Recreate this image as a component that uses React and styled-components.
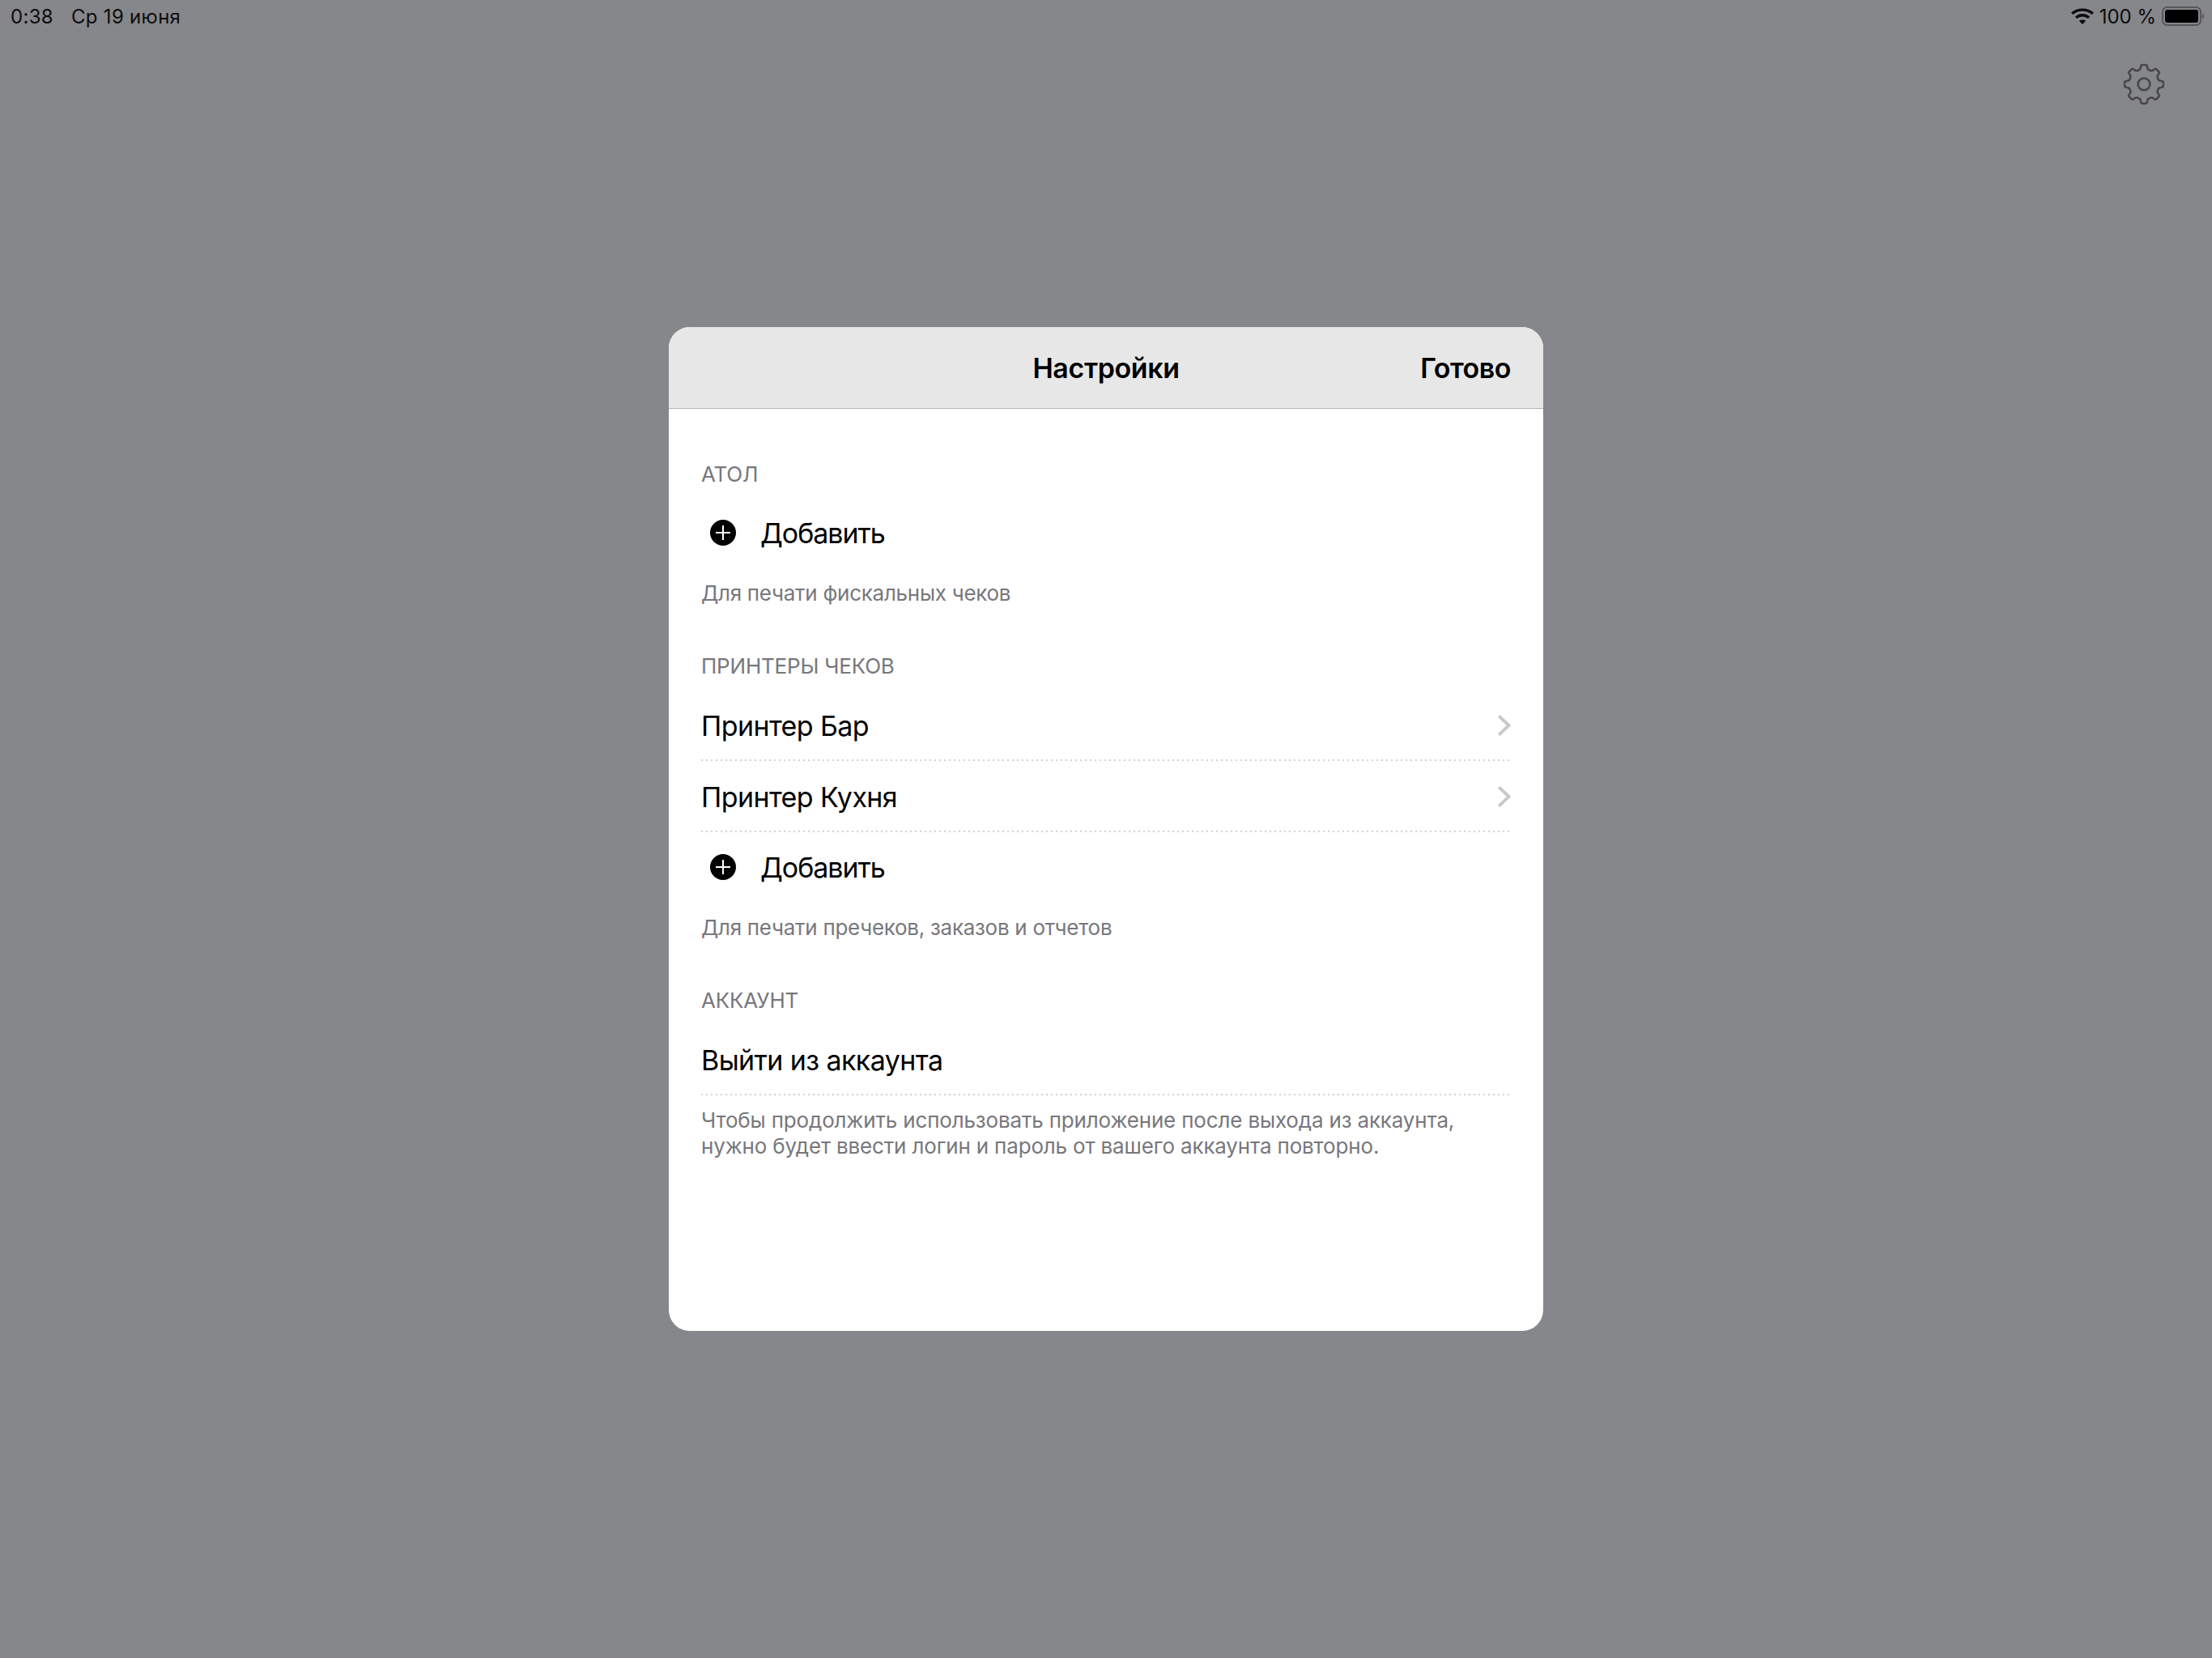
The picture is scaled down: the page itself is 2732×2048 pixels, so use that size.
import React from "react";
import styled, { createGlobalStyle } from "styled-components";

const Global = createGlobalStyle`
  html, body { margin: 0; padding: 0; }
  body { background: #86878b; }
  * { box-sizing: border-box; }
`;

const FONT = `Inter, "Noto Sans", "Liberation Sans", sans-serif`;

const Page = styled.div`
  width: 2732px;
  height: 2048px;
  background: #86878b;
  font-family: ${FONT};
  display: flex;
  flex-direction: column;
  overflow: hidden;
`;
const StatusBar = styled.div`
  height: 40px;
  display: flex;
  align-items: center;
  justify-content: space-between;
  padding: 0 10px 0 13px;
  font-size: 24px;
  color: #0c0c0d;
`;
const StatusGroup = styled.div`
  display: flex;
  align-items: center;
  gap: ${p => p.$gap}px;
  letter-spacing: ${p => p.$ls ?? 0}px;
`;
const ToolBar = styled.div`
  height: 88px;
  display: flex;
  justify-content: flex-end;
  align-items: flex-start;
  padding: 38px 58px 0 0;
`;
const ModalRow = styled.div`
  display: flex;
  justify-content: center;
  padding-top: 276px;
`;
const Modal = styled.div`
  width: 1080px;
  height: 1240px;
  background: #fff;
  border-radius: 26px;
  overflow: hidden;
  display: flex;
  flex-direction: column;
`;
const Header = styled.div`
  height: 101px;
  background: #e7e7e7;
  border-bottom: 1px solid #b2b2b3;
  display: grid;
  grid-template-columns: 1fr auto 1fr;
  align-items: center;
  padding: 0 40px;
`;
const Title = styled.div`
  grid-column: 2;
  font-size: 34px;
  font-weight: 600;
  letter-spacing: -0.4px;
  color: #000;
`;
const Done = styled.div`
  grid-column: 3;
  justify-self: end;
  font-size: 34px;
  font-weight: 600;
  letter-spacing: -0.5px;
  color: #000;
`;
const Body = styled.div`
  padding: 63px 40px 0;
`;
const Section = styled.section`
  margin-bottom: 56px;
`;
const Label = styled.div`
  height: 36px;
  line-height: 36px;
  font-size: 26px;
  letter-spacing: -0.2px;
  color: #77777c;
  margin-bottom: 11px;
`;
const Row = styled.div`
  height: 88px;
  display: flex;
  align-items: center;
  justify-content: space-between;
  font-size: 34px;
  letter-spacing: -0.6px;
  color: #000;
  background-image: ${p => p.$sep ? "linear-gradient(to right, #d2d2d4 2px, transparent 2px)" : "none"};
  background-size: 6px 2px;
  background-position: left bottom;
  background-repeat: repeat-x;
`;
const AddLabel = styled.div`
  display: flex;
  align-items: center;
  gap: 30px;
  padding: 0 0 2px 11px;
  letter-spacing: -1.05px;
`;
const Note = styled.div`
  font-size: 26px;
  line-height: 32px;
  letter-spacing: ${p => p.$ls ?? -0.28}px;
  color: #77777c;
  margin-top: ${p => p.$mt ?? 14}px;
`;

const gearPath = (() => {
  const cx = 26, cy = 26, n = 8, R = 23.8, r = 19;
  const pts = [];
  for (let i = 0; i < n; i++) {
    const a = (i / n) * Math.PI * 2 - Math.PI / 2;
    const s = Math.PI / n;
    const p = (ang, rad) => `${(cx + Math.cos(ang) * rad).toFixed(2)} ${(cy + Math.sin(ang) * rad).toFixed(2)}`;
    pts.push(`${i === 0 ? "M" : "L"}${p(a - s * 0.36, R)}`);
    pts.push(`Q${p(a, R + 0.6)} ${p(a + s * 0.36, R)}`);
    pts.push(`L${p(a + s * 0.66, r)}`);
    pts.push(`Q${p(a + s, r - 0.8)} ${p(a + s * 1.34, r)}`);
  }
  return pts.join(" ") + "Z";
})();

const Gear = () => (
  <svg width="52" height="52" viewBox="0 0 52 52" fill="none" stroke="#49494c" strokeWidth="2.6" strokeLinejoin="round">
    <path d={gearPath} />
    <circle cx="26" cy="26" r="7.4" />
  </svg>
);
const Wifi = () => (
  <svg width="28" height="20" viewBox="0 0 28 20" fill="none" stroke="#0c0c0d" strokeWidth="3.4">
    <path d="M1.2 6.8C8.5 0.6 19.5 0.6 26.8 6.8" />
    <path d="M6 11.8C10.8 7.8 17.2 7.8 22 11.8" />
    <path d="M14 20L9.8 15.8C12.2 14 15.8 14 18.2 15.8Z" fill="#0c0c0d" stroke="none" />
  </svg>
);
const Battery = () => (
  <svg width="52" height="24" viewBox="0 0 52 24">
    <rect x="1" y="1" width="47" height="22" rx="5.5" fill="none" stroke="#57575a" strokeWidth="2" />
    <rect x="4" y="4" width="41" height="16" rx="3" fill="#000" />
    <path d="M50 8.5C51.5 9 52 10.5 52 12C52 13.5 51.5 15 50 15.5Z" fill="#57575a" />
  </svg>
);
const Plus = () => (
  <svg width="32" height="32" viewBox="0 0 32 32">
    <circle cx="16" cy="16" r="16" fill="#000" />
    <path d="M16 7V25M7 16H25" stroke="#fff" strokeWidth="2" />
  </svg>
);
const Chevron = () => (
  <svg width="16" height="26" viewBox="0 0 16 26" fill="none" stroke="#c8c8cc" strokeWidth="3.8">
    <path d="M1.3 1.3L13.6 13L1.3 24.7" />
  </svg>
);

export default function App() {
  return (
    <Page>
      <Global />
      <StatusBar>
        <StatusGroup $gap={22} $ls={0.3}>
          <span>0:38</span>
          <span>Ср 19 июня</span>
        </StatusGroup>
        <StatusGroup $gap={7}>
          <Wifi />
          <span>100 %</span>
          <Battery />
        </StatusGroup>
      </StatusBar>
      <ToolBar><Gear /></ToolBar>
      <ModalRow>
        <Modal>
          <Header>
            <Title>Настройки</Title>
            <Done>Готово</Done>
          </Header>
          <Body>
            <Section>
              <Label>АТОЛ</Label>
              <Row><AddLabel><Plus />Добавить</AddLabel></Row>
              <Note>Для печати фискальных чеков</Note>
            </Section>
            <Section>
              <Label>ПРИНТЕРЫ ЧЕКОВ</Label>
              <Row $sep>Принтер Бар<Chevron /></Row>
              <Row $sep>Принтер Кухня<Chevron /></Row>
              <Row><AddLabel><Plus />Добавить</AddLabel></Row>
              <Note>Для печати пречеков, заказов и отчетов</Note>
            </Section>
            <Section>
              <Label>АККАУНТ</Label>
              <Row $sep>Выйти из аккаунта</Row>
              <Note $mt={15} $ls={-0.17}>Чтобы продолжить использовать приложение после выхода из аккаунта,<br />нужно будет ввести логин и пароль от вашего аккаунта повторно.</Note>
            </Section>
          </Body>
        </Modal>
      </ModalRow>
    </Page>
  );
}
